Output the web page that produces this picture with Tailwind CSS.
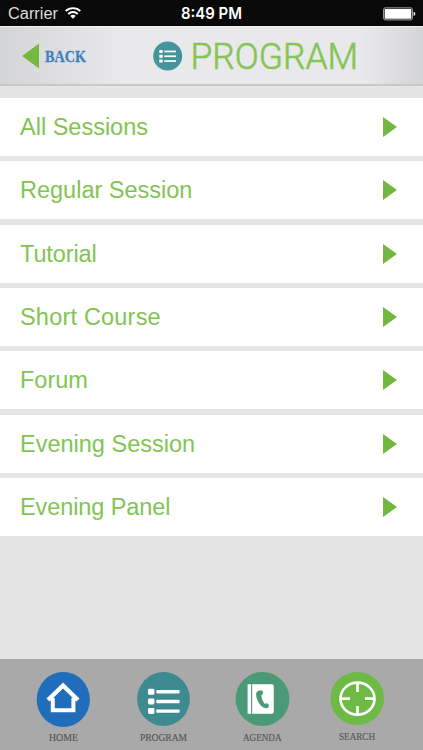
<!doctype html>
<html lang="en">
<head>
    <meta charset="utf-8">
    <meta name="viewport" content="width=device-width,initial-scale=1.0">
    <title>Program</title>
    <script src="https://cdn.jsdelivr.net/npm/@tailwindcss/browser@4"></script>
</head>
<body class="bg-[#e5e5e5] font-['Liberation_Sans',sans-serif]">

<div class="w-full h-[750px] flex flex-col overflow-hidden">
    <!-- status bar -->
    <div class="h-[26px] shrink-0 bg-[#090909] text-white grid grid-cols-3 items-center pl-2 pr-[7px]">
        <div class="flex items-center pt-[2px]">
            <svg class="w-[51px] h-5" viewBox="0 0 51 20">
                <text x="0" y="15.2" font-size="16" fill="#ddd" textLength="50" lengthAdjust="spacingAndGlyphs">Carrier</text>
            </svg>
            <svg class="w-4 h-3 ml-[6px] -mt-[2px]" viewBox="0 0 16 12" fill="none" stroke="#fff" stroke-width="1.9">
                <path d="M.7 4.2a10.3 10.3 0 0 1 14.6 0M3.3 7a6.6 6.6 0 0 1 9.4 0"/>
                <path d="M8 11.8 5.3 9.1a3.8 3.8 0 0 1 5.4 0z" fill="#fff" stroke="none"/>
            </svg>
        </div>
        <div class="flex justify-center">
            <svg class="w-[64px] h-5" viewBox="0 0 64 20">
                <text x="1" y="16.2" font-family="Inter, sans-serif" font-size="15.6" font-weight="600" fill="#fff" textLength="61" lengthAdjust="spacingAndGlyphs">8:49 PM</text>
            </svg>
        </div>
        <div class="flex justify-end items-center pt-px">
            <svg class="w-[33px] h-[14px]" viewBox="0 0 33 14">
                <rect x=".6" y=".9" width="28.8" height="12" rx="1.6" fill="none" stroke="#aaa" stroke-width="1"/>
                <rect x="1.7" y="2" width="26.6" height="9.8" rx=".6" fill="#fff"/>
                <path d="M30.6 4.7q1.8.6 1.8 2.2t-1.8 2.2z" fill="#eee"/>
            </svg>
        </div>
    </div>

    <!-- header -->
    <header class="h-[60px] shrink-0 flex items-center pl-[22px] bg-linear-to-r from-[#d4d5d7] via-[#e9e9eb] via-30% to-[#e9e9eb] border-t border-t-[#f2f2f2] border-b-2 border-b-[#c9c9cb]">
        <a href="#" class="flex items-center">
            <svg class="w-[17px] h-[26px]" viewBox="0 0 17 26"><path d="M0 13 17 .5v25z" fill="#77b843"/></svg>
            <svg class="w-[49px] h-[34px] ml-[3px]" viewBox="0 0 49 34">
                <text x="3" y="22.5" font-family="Liberation Serif, serif" font-weight="bold" font-size="17.5" fill="#3f80c2" stroke="#3f80c2" stroke-width=".3" textLength="41" lengthAdjust="spacingAndGlyphs">BACK</text>
            </svg>
        </a>
        <svg class="w-[30px] h-[30px] ml-[62px]" viewBox="0 0 30 30">
            <circle cx="14.7" cy="15" r="14.5" fill="#43959c"/>
            <g fill="#fff">
                <rect x="6.3" y="9" width="3.4" height="3" rx=".6"/>
                <rect x="6.3" y="13.8" width="3.4" height="3" rx=".6"/>
                <rect x="6.3" y="18.6" width="3.4" height="3" rx=".6"/>
                <rect x="11.3" y="9.6" width="11.7" height="1.7"/>
                <rect x="11.3" y="14.4" width="11.7" height="1.7"/>
                <rect x="11.3" y="19.2" width="11.7" height="1.7"/>
            </g>
        </svg>
        <svg class="w-[176px] h-[50px] ml-[3px]" viewBox="0 0 176 50">
            <text x="4.6" y="38.2" font-family="Roboto, sans-serif" font-weight="300" font-size="36.6" fill="#84c554" stroke="#84c554" stroke-width=".6" textLength="167.5" lengthAdjust="spacingAndGlyphs">PROGRAM</text>
        </svg>
        <div class="self-stretch flex-1 bg-linear-to-r from-transparent to-[#d4d5d7]"></div>
    </header>

    <!-- session types -->
    <main class="flex flex-col gap-[5.33px] pt-3 text-[23.5px] text-[#82c454]">
        <a href="#" class="h-[58px] bg-white flex items-center justify-between pl-5 pr-[26px]">
            <span class="pt-px">All Sessions</span>
            <svg class="w-[14px] h-5" viewBox="0 0 14 20"><path d="M0 0 14 10 0 20z" fill="#72b840"/></svg>
        </a>
        <a href="#" class="h-[58px] bg-white flex items-center justify-between pl-5 pr-[26px]">
            <span class="pt-px">Regular Session</span>
            <svg class="w-[14px] h-5" viewBox="0 0 14 20"><path d="M0 0 14 10 0 20z" fill="#72b840"/></svg>
        </a>
        <a href="#" class="h-[58px] bg-white flex items-center justify-between pl-5 pr-[26px]">
            <span class="pt-px tracking-[-.1px]">Tutorial</span>
            <svg class="w-[14px] h-5" viewBox="0 0 14 20"><path d="M0 0 14 10 0 20z" fill="#72b840"/></svg>
        </a>
        <a href="#" class="h-[58px] bg-white flex items-center justify-between pl-5 pr-[26px]">
            <span class="pt-[2px] tracking-[.2px]">Short Course</span>
            <svg class="w-[14px] h-5" viewBox="0 0 14 20"><path d="M0 0 14 10 0 20z" fill="#72b840"/></svg>
        </a>
        <a href="#" class="h-[58px] bg-white flex items-center justify-between pl-5 pr-[26px]">
            <span class="pt-px">Forum</span>
            <svg class="w-[14px] h-5" viewBox="0 0 14 20"><path d="M0 0 14 10 0 20z" fill="#72b840"/></svg>
        </a>
        <a href="#" class="h-[58px] bg-white flex items-center justify-between pl-5 pr-[26px]">
            <span class="pt-[2px]">Evening Session</span>
            <svg class="w-[14px] h-5" viewBox="0 0 14 20"><path d="M0 0 14 10 0 20z" fill="#72b840"/></svg>
        </a>
        <a href="#" class="h-[58px] bg-white flex items-center justify-between pl-5 pr-[26px]">
            <span class="pt-[2px] tracking-[-.1px]">Evening Panel</span>
            <svg class="w-[14px] h-5" viewBox="0 0 14 20"><path d="M0 0 14 10 0 20z" fill="#72b840"/></svg>
        </a>
    </main>

    <!-- tab bar -->
    <nav class="mt-auto h-[91px] shrink-0 bg-[#a9a9a9] flex items-start gap-[44px] pt-[13px] pl-[36px] font-['Liberation_Serif',serif]">
        <a href="#" class="w-[54px]">
            <svg class="w-[54px] h-[72px]" viewBox="0 0 54 72">
                <ellipse cx="27.3" cy="27.5" rx="26.6" ry="27.5" fill="#1f6dbb"/>
                <path d="M16.8 26v12.2h20.6V26" fill="none" stroke="#fff" stroke-width="4"/>
                <path d="M12 28 27 13.5 42 28" fill="none" stroke="#fff" stroke-width="4.4"/>
                <text x="13" y="69" font-size="10.8" fill="#555" stroke="#555" stroke-width=".15" textLength="29" lengthAdjust="spacingAndGlyphs">HOME</text>
            </svg>
        </a>
        <a href="#" class="w-[58px]">
            <svg class="w-[58px] h-[72px]" viewBox="0 0 58 72">
                <ellipse cx="29.5" cy="27" rx="26.4" ry="27" fill="#3d8a90"/>
                <g fill="#fff">
                    <rect x="14" y="16.8" width="6.4" height="6" rx="1.4"/>
                    <rect x="14" y="26.4" width="6.4" height="6" rx="1.4"/>
                    <rect x="14" y="36" width="6.4" height="6" rx="1.4"/>
                    <rect x="22.3" y="18.1" width="23.3" height="3.4" rx=".8"/>
                    <rect x="22.3" y="27.8" width="23.3" height="3.4" rx=".8"/>
                    <rect x="22.3" y="37.4" width="23.3" height="3.4" rx=".8"/>
                </g>
                <text x="6" y="69.2" font-size="10.8" fill="#555" stroke="#555" stroke-width=".15" textLength="47" lengthAdjust="spacingAndGlyphs">PROGRAM</text>
            </svg>
        </a>
        <a href="#" class="w-[55px] -ml-px">
            <svg class="w-[55px] h-[72px]" viewBox="0 0 55 72">
                <ellipse cx="27.5" cy="27" rx="27" ry="27" fill="#4a9a78"/>
                <path d="M12.6 12.3h24.2a2 2 0 0 1 2 2v25.5a2 2 0 0 1-2 2H12.6z" fill="#fff"/>
                <path d="M16.6 12.3v29.5" stroke="#4a9a78" stroke-width="1.1"/>
                <path d="M25.2 18.4q2.3-.6 2.9 1.6.3 2.7-1.8 3.6.5 5.2 3.4 8.4 2.3-1.7 3.8.4 1.2 2.4-.9 3.5-3.4 1.2-6.8-2.3-4.8-6-4.7-11.9.3-2.9 4.1-3.3z" fill="#4a9a78"/>
                <text x="8" y="69" font-size="10.8" fill="#555" stroke="#555" stroke-width=".15" textLength="38.5" lengthAdjust="spacingAndGlyphs">AGENDA</text>
            </svg>
        </a>
        <a href="#" class="w-[54px] -ml-1">
            <svg class="w-[54px] h-[72px]" viewBox="0 0 54 72">
                <ellipse cx="27.2" cy="26.5" rx="26.8" ry="26.5" fill="#6dba45"/>
                <g fill="none" stroke="#fff" stroke-width="2.7">
                    <ellipse cx="27.5" cy="26.7" rx="17" ry="16"/>
                    <path d="M27.5 10.5V20M27.5 34v9.500M10.500 26.700H20M35 26.700h9.500"/>
                </g>
                <text x="9" y="68.400" font-size="10.800" fill="#555" stroke="#555" stroke-width=".15" textLength="36" lengthAdjust="spacingAndGlyphs">SEARCH</text>
            </svg>
        </a>
    </nav>
</div>

</body>
</html>
